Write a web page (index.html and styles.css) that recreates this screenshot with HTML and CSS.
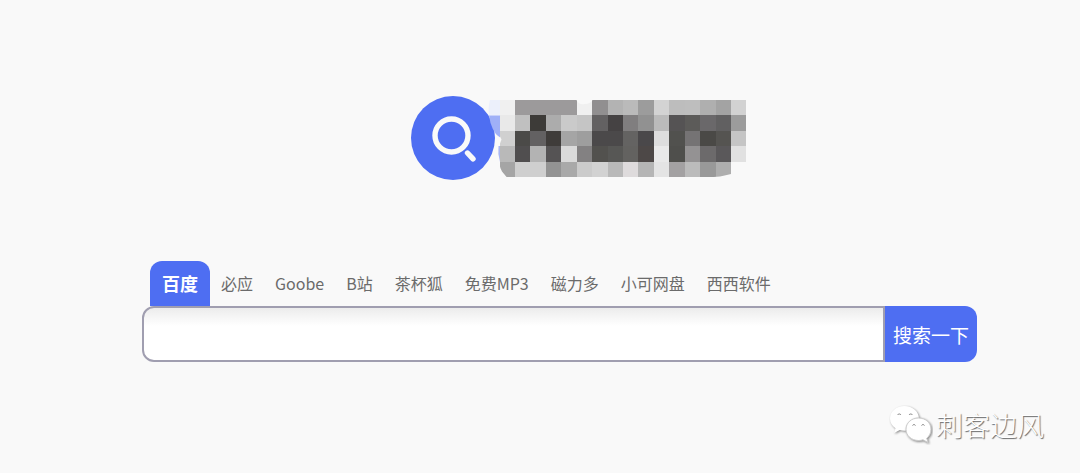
FILE: index.html
```html
<!DOCTYPE html>
<html lang="zh-CN">
  <head>
    <meta charset="UTF-8" />
    <meta name="viewport" content="width=device-width, initial-scale=1.0" />
    <title>搜索一下</title>
    <link rel="stylesheet" href="styles.css">
  </head>
  <body>
    <main class="container">
      <div class="logo">
        <svg width="338" height="88" viewBox="410 94 338 88" role="img" aria-label="搜索">
          <circle cx="453" cy="138" r="42" fill="#4e6ef2" />
          <circle cx="451.500" cy="135.500" r="16.500" fill="none" stroke="#f9f9f9" stroke-width="5.400" />
          <path d="M467.500 153l5.500 5.800" stroke="#f9f9f9" stroke-width="5.400" stroke-linecap="round" />
          <path d="M490 100h10v15.500h-11q-1-9 1-15.500z" fill="#ecf0fb" />
          <path d="M489 115.500h11v23q-9-8-11-23z" fill="#9fb0f7" />
          <path d="M495 134l6 4-4 6z" fill="#f9f9f9" />
          <path d="M500 146h-1.500q-1 8 1.500 16z" fill="#a9b6f2" />
          <clipPath id="mosaicShape">
            <path d="M499.500 100h77q2 5 8 4 6 0 8-4H746.500v62H731v12q-10 3-24 3.500H507l-5-6q-4-6-3.500-24l3-8-2-4z" />
          </clipPath>
          <g id="mosaic" clip-path="url(#mosaicShape)" shape-rendering="crispEdges"></g>
        </svg>
      </div>

      <nav class="tabs">
        <a class="tab active" href="#baidu">百度</a>
        <a class="tab" href="#bing">必应</a>
        <a class="tab" href="#goobe">Goobe</a>
        <a class="tab" href="#bilibili">B站</a>
        <a class="tab" href="#chabeihu">茶杯狐</a>
        <a class="tab" href="#mp3">免费MP3</a>
        <a class="tab" href="#ciliduo">磁力多</a>
        <a class="tab" href="#wangpan">小可网盘</a>
        <a class="tab" href="#xixi">西西软件</a>
      </nav>

      <form class="search">
        <input class="search-input" type="text" name="wd" aria-label="搜索" autocomplete="off" />
        <button class="search-button" type="submit">搜索一下</button>
      </form>
    </main>

    <div class="watermark">
      <svg class="wechat" width="44" height="40" viewBox="0 0 44 40" aria-hidden="true">
        <path class="bubble" d="M15.500 1C7.300 1 1 6.500 1 13.500c0 4 2 7.500 5.500 9.800L5 28l5.800-3c1.500.5 3 .7 4.700.7 8.200 0 14.500-5.300 14.500-12.200S23.700 1 15.500 1z" />
        <path class="bubble front" d="M29.500 13C22.500 13 17 17.800 17 24.200s5.500 11.300 12.500 11.300c1.600 0 3-.2 4.500-.7l5 2.700-1.300-4.300c2.700-2 4.300-5.300 4.300-9C42 17.800 36.500 13 29.500 13z" />
        <path class="eyes" d="M8.500 10a2 2 0 0 1 3.500 0M20 10a2 2 0 0 1 3.500 0M23.500 20.500a1.700 1.700 0 0 1 3 0M32.500 20.500a1.700 1.700 0 0 1 3 0" />
      </svg>
      <span>刺客边风</span>
    </div>

    <script>
      // one string per row, one colour per cell
      const rows = [
        "f0f0f0 9c9a9b 9c9a9b 9c9a9b 9c9a9b f0f0f0 918f90 b3b3b3 bababa 9c9c9c d3d3d3 bdbdbd bebebe afafaf a3a3a3 d2d2d2",
        "e9e9e9 c0c0c0 3d3b38 acacac cacaca c5c5c5 636162 454243 807e7f 919191 bbbbbb 555354 5c5b59 6a686a 616061 9c9c9c",
        "d0d0d0 4b4a48 636162 3f3c3a a5a5a5 9e9e9e 4b494a 4b494a 646362 4a484a dddddd 51514e 757374 4a4946 555451 c5c5c5",
        "b9b9b9 504e4f b3b3b3 555354 dadada 838182 52514e 575755 636260 4d4847 e9e9e9 4f4f4c 949293 6c6a6b 5a585a e1e1e1",
        "a5a5a5 cfcfcf cfcfcf 939393 a9a9a9 cbcbcb d2d2d2 b9b9b9 dedbdc b5b5b5 e4e4e4 a3a1a2 bbbbbb 999999 aeaeae",
      ];
      const mosaic = document.getElementById("mosaic");
      const size = 15.43;

      rows.forEach((row, y) => {
        row.split(" ").forEach((color, x) => {
          const cell = document.createElementNS("http://www.w3.org/2000/svg", "rect");
          cell.setAttribute("x", 499.6 + x * size);
          cell.setAttribute("y", 100 + y * size);
          cell.setAttribute("width", size);
          cell.setAttribute("height", size);
          cell.setAttribute("fill", "#" + color);
          mosaic.appendChild(cell);
        });
      });
    </script>
  </body>
</html>
```

FILE: styles.css
```css
* {
  box-sizing: border-box;
}

body {
  margin: 0;
  min-height: 100vh;
  position: relative;
  background-color: #f9f9f9;
  font-family: "Noto Sans CJK SC", sans-serif;
}

.container {
  width: 90%;
  max-width: 874px;
  margin: 0 auto;
  padding: 94px 0 0 39px;
}

.logo {
  padding-left: 38px;
}

.logo svg {
  display: block;
  margin: 0 auto;
  max-width: 100%;
}

.tabs {
  display: flex;
  flex-wrap: wrap;
  margin-top: 79px;
  padding-left: 8px;
}

.tab {
  height: 45px;
  padding: 0 11px;
  line-height: 44px;
  font-size: 16px;
  color: #6b6b6b;
  text-decoration: none;
  white-space: nowrap;
}

.tab.active {
  padding: 0 12px;
  background-color: #4e6ef2;
  border-radius: 12px 12px 0 0;
  color: #fff;
  font-size: 18px;
  font-weight: 700;
}

.search {
  display: flex;
}

.search-input {
  flex: 1;
  min-width: 0;
  height: 56px;
  padding: 0 16px;
  border: 2px solid #a09eb0;
  border-radius: 12px 0 0 12px;
  background: linear-gradient(#ececec, #fff 18px);
  font-size: 18px;
  outline: none;
}

.search-button {
  width: 92px;
  height: 56px;
  padding: 0;
  border: none;
  border-radius: 0 12px 12px 0;
  background-color: #4e6ef2;
  color: #fff;
  font-family: inherit;
  font-size: 19px;
  line-height: 58px;
  cursor: pointer;
}

.watermark {
  position: absolute;
  right: 36px;
  bottom: 28px;
  display: flex;
  align-items: center;
  gap: 3px;
  color: #fff;
  font-size: 27px;
  font-weight: 300;
  line-height: 40px;
  text-shadow: 1px 1px 1px #666;
}

.bubble {
  fill: #fff;
  filter: drop-shadow(1px 1px 1px #888);
}

.bubble.front {
  stroke: #ccc;
}

.eyes {
  fill: none;
  stroke: #888;
}
```
